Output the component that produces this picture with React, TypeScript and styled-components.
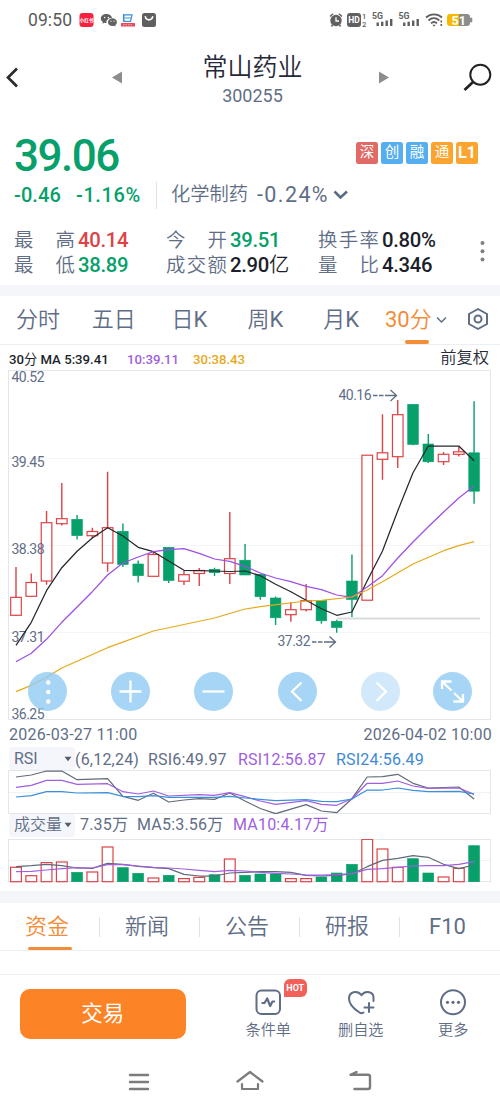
import React from "react";
import styled, { createGlobalStyle } from "styled-components";

const C = {
  green: "#07a06b",
  red: "#dc4346",
  slate: "#5f6e86",
  dark: "#262938",
  ink: "#1c1f2b",
  orange: "#f28d3a",
  purple: "#a15fe0",
  gold: "#e6a91a",
  blue: "#3e8ad6",
  band: "#f5f6fa",
  line: "#eceef2",
};

const Global = createGlobalStyle`
  * { box-sizing: border-box; }
  html, body { margin: 0; padding: 0; background: #fff; }
  body { font-family: Roboto, "Noto Sans CJK SC", sans-serif; width: 500px; }
  svg { display: block; flex: none; }
  svg text { font-family: Roboto, "Noto Sans CJK SC", sans-serif; }
`;

const Screen = styled.div`
  width: 500px;
  height: 1111px;
  overflow: hidden;
  background: #fff;
  display: flex;
  flex-direction: column;
  > * { flex: none; }
`;

const StatusBar = styled.div`
  height: 40px;
  padding: 0 27px 0 28px;
  display: flex;
  align-items: center;
  justify-content: space-between;
`;
const StatusSide = styled.div`
  display: flex;
  align-items: center;
`;
const Clock = styled.span`
  width: 51px;
  font-size: 17.5px;
  line-height: 40px;
  letter-spacing: 0.1px;
  color: #5a5a5a;
`;

const Header = styled.div`
  height: 80px;
  padding: 0 8px 0 5px;
  display: grid;
  grid-template-columns: 106px 1fr 106px;
`;
const HeaderSide = styled.div<{ $top: number }>`
  display: flex;
  justify-content: space-between;
  padding-top: ${(p) => p.$top}px;
`;
const PrevIcon = styled.svg`
  margin-right: -11px;
`;
const NextIcon = styled.svg`
  margin-left: -8px;
`;
const TitleBlock = styled.div`
  display: flex;
  flex-direction: column;
  align-items: center;
  padding: 11px 0 0 8px;
`;
const StockName = styled.div`
  font-size: 25px;
  font-weight: 350;
  line-height: 34px;
  color: ${C.dark};
`;
const StockCode = styled.div`
  font-size: 18px;
  line-height: 22px;
  color: ${C.slate};
`;

const Quote = styled.section`
  height: 165px;
  padding: 12px 0 0 14px;
  position: relative;
`;
const PriceRow = styled.div`
  height: 46px;
  display: flex;
  align-items: center;
  justify-content: space-between;
  padding-right: 22px;
`;
const Price = styled.div`
  padding-top: 1px;
  font-size: 44px;
  line-height: 46px;
  font-weight: 500;
  letter-spacing: -1.5px;
  color: ${C.green};
`;
const Badges = styled.div`
  display: flex;
  gap: 3px;
  margin-top: -4px;
`;
const Badge = styled.span<{ $bg: string; $bold?: boolean }>`
  width: 22px;
  height: 22px;
  border-radius: 2.5px;
  background: ${(p) => p.$bg};
  color: #fff;
  font-size: ${(p) => (p.$bold ? 16 : 14.5)}px;
  font-weight: ${(p) => (p.$bold ? 700 : 400)};
  line-height: 22px;
  text-align: center;
`;
const ChangeRow = styled.div`
  height: 28px;
  margin-top: 3px;
  display: flex;
  align-items: center;
`;
const Change = styled.span<{ $w: number; $ls: number }>`
  width: ${(p) => p.$w}px;
  font-size: 20px;
  line-height: 28px;
  font-weight: 500;
  letter-spacing: ${(p) => p.$ls}px;
  color: ${C.green};
`;
const Divider = styled.i<{ $h: number }>`
  width: 1px;
  height: ${(p) => p.$h}px;
  background: #dfe2e8;
`;
const Sector = styled.span`
  margin-left: 14px;
  width: 86px;
  font-size: 19.3px;
  font-weight: 350;
  line-height: 28px;
  color: ${C.slate};
`;
const SectorChange = styled.span`
  width: 76px;
  font-size: 21.5px;
  letter-spacing: 1.4px;
  line-height: 28px;
  color: ${C.slate};
`;
const Stats = styled.div`
  margin-top: 18.5px;
  display: grid;
  grid-template-columns: 152px 152px 1fr;
  grid-auto-rows: 25px;
`;
const Stat = styled.div`
  display: flex;
  align-items: center;
  line-height: 25px;
`;
const StatLabel = styled.span`
  width: 61px;
  display: flex;
  justify-content: space-between;
  font-size: 19.4px;
  font-weight: 350;
  color: ${C.slate};
`;
const StatValue = styled.span<{ $c: string }>`
  padding-left: 3px;
  font-size: 20.3px;
  font-weight: 500;
  letter-spacing: -0.3px;
  white-space: nowrap;
  color: ${(p) => p.$c};
  i { font-style: normal; font-weight: 350; }
`;
const MoreDots = styled.div`
  position: absolute;
  left: 480px;
  top: 120px;
`;

const Band = styled.div<{ $h: number }>`
  height: ${(p) => p.$h}px;
  background: ${C.band};
`;

const PeriodTabs = styled.nav`
  height: 49px;
  display: flex;
  border-bottom: 1px solid ${C.line};
`;
const Period = styled.div<{ $active?: boolean }>`
  width: ${(p) => (p.$active ? 78 : 75.8)}px;
  padding-left: ${(p) => (p.$active ? 6 : 0)}px;
  display: flex;
  align-items: center;
  justify-content: ${(p) => (p.$active ? "flex-start" : "center")};
  gap: 4px;
  position: relative;
  font-size: 22px;
  font-weight: 350;
  line-height: 48px;
  padding-bottom: 1px;
  white-space: nowrap;
  color: ${(p) => (p.$active ? C.orange : C.slate)};
  b { font-weight: 400; }
`;
const ActiveBar = styled.i<{ $l: number; $w: number; $h: number }>`
  position: absolute;
  left: ${(p) => p.$l}px;
  bottom: 0;
  width: ${(p) => p.$w}px;
  height: ${(p) => p.$h}px;
  border-radius: 2px;
  background: ${C.orange};
`;
const SettingsCell = styled.div`
  padding: 11px 0 0 10px;
`;

const Legend = styled.div`
  height: 25px;
  padding: 0 11px 0 9px;
  display: flex;
  align-items: center;
  line-height: 25px;
`;
const LegendItem = styled.span<{ $c: string; $w: number }>`
  width: ${(p) => p.$w}px;
  font-size: 13.2px;
  font-weight: 500;
  padding-top: 3px;
  white-space: nowrap;
  color: ${(p) => p.$c};
  i { font-style: normal; font-weight: 400; }
`;
const Adjust = styled.span`
  margin-left: auto;
  font-size: 16.3px;
  font-weight: 350;
  line-height: 22px;
  color: ${C.dark};
`;

const ChartArea = styled.div`
  height: 350px;
  position: relative;
`;
const Controls = styled.div`
  position: absolute;
  left: 27.5px;
  top: 302px;
  display: flex;
  gap: 44.4px;
`;
const Control = styled.button<{ $faded?: boolean; $shift?: boolean }>`
  width: 39px;
  height: 39px;
  padding: 0;
  border: 0;
  border-radius: 50%;
  background: rgba(145, 202, 243, ${(p) => (p.$faded ? 0.42 : 0.8)});
  margin-left: ${(p) => (p.$shift ? -11 : 0)}px;
`;

const DateRow = styled.div`
  height: 26px;
  padding: 2px 8px 0 9px;
  display: flex;
  justify-content: space-between;
  font-size: 16px;
  line-height: 26px;
  letter-spacing: 0.25px;
  color: ${C.slate};
`;
const IndicatorRow = styled.div<{ $h: number; $pb?: number }>`
  height: ${(p) => p.$h}px;
  padding: 0 0 ${(p) => p.$pb ?? 0}px 9px;
  display: flex;
  align-items: center;
  font-size: 16px;
`;
const Picker = styled.div`
  width: 66px;
  height: 23px;
  padding: 0 3px 0 5px;
  margin-top: 1px;
  border-radius: 3px;
  background: #f4f6fb;
  display: flex;
  align-items: center;
  justify-content: space-between;
  line-height: 22px;
  font-weight: 400;
  white-space: nowrap;
  color: ${C.slate};
  i { font-style: normal; font-weight: 350; }
`;
const Reading = styled.span<{ $w: number; $c?: string; $ml?: number; $mt?: number }>`
  width: ${(p) => p.$w}px;
  margin-left: ${(p) => p.$ml ?? 0}px;
  margin-top: ${(p) => p.$mt ?? 0}px;
  letter-spacing: 0.2px;
  line-height: 22px;
  white-space: nowrap;
  color: ${(p) => p.$c ?? C.slate};
`;

const InfoTabs = styled.nav`
  height: 48px;
  display: flex;
  border-bottom: 1px solid ${C.line};
`;
const InfoTab = styled.div<{ $active?: boolean }>`
  width: 100px;
  height: 47px;
  display: flex;
  align-items: center;
  position: relative;
  font-size: 22px;
  font-weight: 350;
  color: ${(p) => (p.$active ? C.orange : C.slate)};
  span { flex: 1; padding-right: 5px; text-align: center; line-height: 46px; }
  b { font-weight: 400; }
`;
const Spacer = styled.div`
  height: 24px;
  border-bottom: 1px solid ${C.line};
`;

const ActionBar = styled.div`
  height: 75px;
  padding-left: 19.5px;
  display: flex;
`;
const TradeButton = styled.button`
  width: 166.5px;
  height: 50px;
  margin: 14px 36px 0 0;
  padding: 0;
  border: 0;
  border-radius: 10px;
  background: #fd8327;
  color: #fff;
  font: 400 21.5px/50px Roboto, "Noto Sans CJK SC", sans-serif;
`;
const Action = styled.div`
  width: 92.5px;
  padding-top: 13px;
  display: flex;
  flex-direction: column;
  align-items: center;
  position: relative;
`;
const ActionLabel = styled.span`
  font-size: 15.2px;
  font-weight: 350;
  line-height: 28px;
  color: ${C.slate};
`;
const HotTag = styled.span`
  position: absolute;
  left: 62px;
  top: 4px;
  width: 22.5px;
  height: 18px;
  border-radius: 6px 6px 6px 0;
  background: #f2605a;
  color: #fff;
  font-size: 9px;
  font-weight: 700;
  line-height: 18px;
  text-align: center;
`;
const NavBar = styled.div`
  height: 61px;
  padding: 20px 127px 0 128px;
  display: flex;
  justify-content: space-between;
`;

/* [open wick top, body top, body bottom, wick bottom, rising] */
type Candle = [number, number, number, number, boolean];
const candles: Candle[] = [
  [567, 597.3, 615.3, 615.3, true], [573.5, 582.5, 596.3, 596.3, true],
  [511, 522.7, 581, 584.7, true], [483, 518.7, 523.7, 525.5, true],
  [515, 519.3, 535.7, 539.5, false], [527.7, 531.5, 535.7, 538, true],
  [471.7, 527.7, 563, 571.7, true], [523.5, 531.3, 564.5, 567, false],
  [560.5, 564, 575.7, 582.5, false], [552, 554.5, 576.3, 576.3, true],
  [547.3, 547.3, 580.5, 583, false], [571, 574.7, 581.2, 585, true],
  [568, 570.5, 573.5, 586, true], [567.7, 569.3, 572.7, 576, false],
  [512, 558.7, 573.5, 584, true], [544, 560.2, 575, 575, false],
  [573.7, 574.5, 596.7, 599.7, false], [596.5, 598, 617.8, 625, false],
  [602.3, 609.7, 614.7, 621.7, true], [584, 600.7, 609.7, 611.5, true],
  [600.3, 600.3, 620.8, 623.7, false], [619.7, 621.3, 627.5, 632.7, false],
  [554.5, 581, 599.5, 617, false], [455.2, 455.2, 600.2, 600.2, true],
  [414.3, 452.8, 459.3, 479.7, true], [400, 414.7, 456.7, 468, true],
  [404.3, 404.3, 444.5, 445.3, false], [434, 444, 461.8, 463, false],
  [452, 454.3, 461.7, 465, true], [446.3, 451.8, 454.3, 456.5, true],
  [401.3, 452.8, 491.2, 503.7, false],
];
const volumeTops = [
  867.3, 875.7, 862.6, 862, 872.3, 872, 847, 867.7, 873.3, 878, 875.3, 878.6, 877.4,
  874.7, 859, 875.3, 874, 874, 878.6, 878.6, 877, 873, 864.3, 839.3, 849, 867.3,
  858.7, 873, 877, 868.3, 845.7,
];

type Pt = [number, number];
const seq = (ys: number[]): Pt[] => ys.map((y, i) => [i, y]);
const cx = (i: number) => 16 + i * 15.27;
const path = (pts: Pt[], top: number) =>
  pts.map(([i, y], n) => `${n ? "L" : "M"}${cx(i).toFixed(1)} ${(y - top).toFixed(1)}`).join("");

const ma5 = seq([645.3, 622.3, 590.7, 567.7, 551.3, 538, 527.7, 536, 547.3, 551.7, 561, 570.3, 570.7, 571, 571.5, 571, 575.7, 584.3, 591.7, 600.3, 608.7, 615.3, 612, 580.7, 551, 510.7, 472.7, 446, 446, 446, 460.7]);
const ma10 = seq([661.7, 653.3, 639.3, 622.3, 607, 591.7, 575, 563, 557, 551.7, 549.7, 548.7, 553.3, 559, 561.3, 566.3, 573, 578, 581.7, 586.3, 589.7, 595, 597.3, 587, 575.7, 558, 542, 526.7, 512, 498, 486]);
const ma30: Pt[] = [[0, 691.7], [1, 685.3], [2, 677.3], [3, 668], [6, 647.7], [9, 631], [13, 618], [15, 609], [16, 606.7], [19, 601], [20, 600.3], [22, 597], [23, 590], [24, 581.7], [26, 564], [28, 550.7], [29, 545.7], [30, 541.7]];

const rsi6: Pt[] = [[0, 777], [1, 775], [2, 771], [3, 771], [4, 779.7], [6, 778.7], [7, 796.3], [8, 800.3], [9, 793.3], [10, 802], [11, 800], [12, 798.7], [13, 799.3], [14, 793], [15, 801], [16, 808.5], [17, 813.7], [19, 804.7], [20, 811], [21, 812.7], [22, 798.7], [23, 777], [24, 776.7], [25, 774.3], [26, 783.3], [27, 788], [29, 787], [30, 799]];
const rsi12: Pt[] = [[0, 787.3], [1, 785.3], [2, 780.3], [3, 780.3], [4, 784.3], [6, 783.7], [7, 791.7], [8, 794], [9, 791], [10, 796], [12, 794.7], [13, 795.3], [14, 792.7], [15, 796.7], [16, 801], [17, 804.3], [19, 800.7], [20, 804.3], [21, 805.3], [22, 798.7], [23, 783.3], [24, 783.3], [25, 781], [26, 786], [27, 788.3], [29, 788], [30, 794.3]];
const rsi24: Pt[] = [[0, 797], [1, 795.7], [2, 791.7], [3, 791.7], [4, 793], [6, 792.7], [7, 796.3], [8, 796.7], [9, 795.7], [10, 797.3], [13, 797.3], [14, 796.3], [15, 798], [17, 800.7], [19, 799.7], [20, 801.3], [21, 801.7], [22, 799], [23, 790], [24, 790], [25, 788], [26, 790.3], [27, 791.7], [29, 791.3], [30, 794]];
const vol5 = seq([866.7, 865.7, 864.3, 865.7, 868, 868.3, 863.3, 864.3, 866.3, 867.7, 868.7, 874.3, 876, 876, 873, 872.3, 871.7, 871.7, 872.3, 875.3, 876, 875.3, 874, 866.7, 860.3, 858.3, 855.7, 857.3, 864.3, 868.7, 865]);
const vol10 = seq([871.7, 871.3, 870, 868.7, 867.7, 868, 864.7, 864.7, 866, 867.3, 868, 869, 870.3, 871.7, 870.3, 871, 872.3, 873.3, 874, 875, 875, 874.7, 873.7, 869.3, 868.7, 867.3, 866, 865.7, 865.7, 864.3, 861.7]);

const Line = ({ pts, top, color }: { pts: Pt[]; top: number; color: string }) => (
  <path d={path(pts, top)} fill="none" stroke={color} strokeWidth={1.25} strokeLinejoin="round" />
);

const PriceChart = () => {
  const T = 370;
  return (
    <svg width="500" height="350" viewBox="0 0 500 350">
      <rect x="8.5" y="0.5" width="482" height="349" fill="none" stroke="#e4e6ec" />
      {[88.5, 175.5, 262.5].map((y) => (
        <path key={y} d={`M9 ${y}H490`} stroke="#f4f5f7" />
      ))}
      <path d="M337 248.500H480" stroke="#dadbdd" strokeWidth="2.200" />
      {candles.map(([wt, bt, bb, wb, up], i) => {
        const x = cx(i);
        const c = up ? C.red : C.green;
        return (
          <g key={i} stroke={c}>
            <path d={`M${x} ${wt - T}V${bt - T}M${x} ${bb - T}V${wb - T}`} strokeWidth="1.400" />
            <rect x={x - 5.3} y={bt - T} width="10.600" height={bb - bt} fill={up ? "none" : c} strokeWidth={up ? 1.2 : 0.6} />
          </g>
        );
      })}
      <g fontSize="14" fill={C.slate}>
        <text x="11.500" y="12" textLength="33">40.52</text>
        <text x="11.500" y="96.800" textLength="33">39.45</text>
        <text x="11.500" y="184" textLength="33">38.38</text>
        <text x="11.500" y="271.500" textLength="33">37.31</text>
        <text x="11.500" y="348.500" textLength="33">36.25</text>
        <text x="338.500" y="29.800" textLength="33">40.16</text>
        <text x="277.500" y="276.300" textLength="33">37.32</text>
      </g>
      <Line pts={ma5} top={T} color="#25272f" />
      <Line pts={ma10} top={T} color="#9c4fe6" />
      <Line pts={ma30} top={T} color={C.gold} />
      <g fill="none" stroke={C.slate} strokeWidth="1.300">
        <path d="M373 25.500h4.500M379 25.500h4.500M385 25.500h12M390.500 20l6 5.500-6 5.500" />
        <path d="M312 272h4.500M318 272h4.500M324 272h12M329.500 266.500l6 5.500-6 5.500" />
      </g>
    </svg>
  );
};

const RsiChart = () => (
  <svg width="500" height="44" viewBox="0 0 500 44">
    <rect x="8.500" y="0.500" width="482" height="43" fill="none" stroke="#e4e6ec" />
    <path d="M9 22.500H490" stroke="#f1f2f5" />
    <Line pts={rsi6} top={770} color="#626b79" />
    <Line pts={rsi12} top={770} color={C.purple} />
    <Line pts={rsi24} top={770} color="#3a90dd" />
  </svg>
);

const VolumeChart = () => (
  <svg width="500" height="52" viewBox="0 0 500 52">
    <rect x="8.500" y="0.500" width="482" height="42" fill="none" stroke="#e4e6ec" />
    <path d="M9 21.500H490" stroke="#f1f2f5" />
    {volumeTops.map((y, i) => {
      const up = candles[i][4];
      const c = up ? C.red : C.green;
      return (
        <rect key={i} x={cx(i) - 5.4} y={y - 839} width="10.800" height={881.7 - y} fill={up ? "none" : c} stroke={c} strokeWidth={up ? 1.2 : 0.6} />
      );
    })}
    <Line pts={vol5} top={839} color="#5f6b78" />
    <Line pts={vol10} top={839} color={C.purple} />
  </svg>
);

const Caret = () => (
  <svg width="8" height="6" viewBox="0 0 8 6"><path d="M0.500 0.800h7L4 5.200z" fill="#565d6b" /></svg>
);

const AppIcons = () => (
  <svg width="78" height="16" viewBox="0 0 78 16">
    <rect x="0.500" y="1" width="14" height="14" rx="3" fill="#f4213f" />
    <text x="7.500" y="9.700" fontSize="4.600" fontWeight="700" fill="#fff" textAnchor="middle">小红书</text>
    <g fill="#606060">
      <path d="M27.500 2c-3.200 0-5.700 2-5.700 4.500 0 1.500.8 2.700 2.100 3.500l-.5 1.700 2-1c.7.200 1.300.3 2.100.3C27 8 29 6 33 6c-.5-2.400-2.800-4-5.500-4z" />
      <path d="M29 10.200c0-2.200 2-3.900 4.500-3.900s4.400 1.700 4.400 3.900c0 1.200-.6 2.200-1.600 2.900l.4 1.500-1.700-.9c-3.500.8-6-1-6-3.500z" />
    </g>
    <g fill="#fff"><circle cx="25.700" cy="5.500" r=".7" /><circle cx="29.400" cy="5.500" r=".7" /><circle cx="32" cy="9.200" r=".6" /><circle cx="35" cy="9.200" r=".6" /></g>
    <path d="M45 2.800h8l-1.500 6.500h-6.500zM46 6h6M44.500 2v7.500" fill="none" stroke="#3c8fd8" strokeWidth="1.200" />
    <rect x="42" y="11" width="14" height="3.600" rx=".5" fill="#e8485a" />
    <path d="M44 12.800h10" stroke="#f7b6bd" strokeWidth="1" strokeDasharray="1.500 1" />
    <rect x="63" y="1" width="14" height="14" rx="2.500" fill="#606060" />
    <path d="M66.300 4.700c.8 4.200 6.600 4.200 7.400 0" fill="none" stroke="#fff" strokeWidth="1.600" strokeLinecap="round" />
  </svg>
);

const Signal = ({ x }: { x: number }) => (
  <g fill="#606060">
    <text x={x} y="7" fontSize="8.500" fontWeight="700" textLength="11" lengthAdjust="spacingAndGlyphs">5G</text>
    <rect x={x + 4.5} y="10.500" width="2.400" height="3.500" />
    <rect x={x + 9} y="9.700" width="2.400" height="4.300" />
    <rect x={x + 13.5} y="8.500" width="2.400" height="5.500" />
    <rect x={x + 18} y="7" width="2.400" height="7" />
  </g>
);

const SystemIcons = () => (
  <svg width="144" height="16" viewBox="0 0 144 16">
    <circle cx="7" cy="8.500" r="5.700" fill="#606060" />
    <path d="M1 4.500L4 1.800M13 4.500L10 1.800M3.500 12.800L2.500 14.500M10.500 12.800l1 1.700" stroke="#606060" strokeWidth="1.500" />
    <path d="M7 5.200V9h3" fill="none" stroke="#fff" strokeWidth="1.300" />
    <rect x="18" y="1" width="14" height="14" rx="3" fill="#606060" />
    <text x="25" y="11" fontSize="8.500" fontWeight="700" fill="#fff" textAnchor="middle">HD</text>
    <text x="33" y="6.500" fontSize="7.500" fontWeight="500" fill="#606060">1</text>
    <text x="33" y="14.500" fontSize="7.500" fontWeight="500" fill="#606060">2</text>
    <Signal x={43} />
    <Signal x={69.5} />
    <g fill="none" stroke="#606060" strokeWidth="1.800">
      <path d="M97 5.500c4.500-4.200 11.500-4.200 16 0" />
      <path d="M99.500 8.500c3.200-3 7.600-3 10.800 0" />
      <path d="M102 11.400c1.800-1.700 4.200-1.700 6 0" />
    </g>
    <path d="M103.300 12.800h3.400L105 14.700z" fill="#606060" />
    <path d="M112.300 8.500v2M112.300 12v2" stroke="#606060" strokeWidth="1.600" />
    <path d="M121 2h9v12h-9a3 3 0 0 1-3-3V5a3 3 0 0 1 3-3z" fill="#f7b900" />
    <path d="M130 2h8a3 3 0 0 1 3 3v6a3 3 0 0 1-3 3h-8z" fill="#8c8c8c" />
    <rect x="141" y="5.500" width="2.300" height="5" rx="1" fill="#8c8c8c" />
    <text x="129.700" y="12.500" fontSize="12.500" fontWeight="700" fill="#fff" textAnchor="middle">51</text>
  </svg>
);

const controlArt = [
  <g fill="#fff"><circle cx="20.200" cy="10.500" r="2.200" /><circle cx="20.200" cy="20" r="2.200" /><circle cx="20.200" cy="29.500" r="2.200" /></g>,
  <path d="M8.500 19.500h22M19.500 8.500v22" />,
  <path d="M8.500 19.500h22" />,
  <path d="M23.500 10.500l-9.500 9 9.500 9.500" />,
  <path d="M15.500 10.500l9.500 9-9.500 9.500" />,
  <path d="M9 17V9.500h9.500M9.500 10l9 8.500M30 22v7.500h-9.500M29.500 29l-8.500-8" />,
];

const stats: { label: string; value: React.ReactNode; color: string }[] = [
  { label: "最高", value: "40.14", color: C.red },
  { label: "今开", value: "39.51", color: C.green },
  { label: "换手率", value: "0.80%", color: C.ink },
  { label: "最低", value: "38.89", color: C.green },
  { label: "成交额", value: <>2.90<i>亿</i></>, color: C.ink },
  { label: "量比", value: "4.346", color: C.ink },
];

export default function App() {
  return (
    <Screen>
      <Global />
      <StatusBar>
        <StatusSide><Clock>09:50</Clock><AppIcons /></StatusSide>
        <StatusSide><SystemIcons /></StatusSide>
      </StatusBar>

      <Header>
        <HeaderSide $top={27}>
          <svg width="14" height="21" viewBox="0 0 14 21"><path d="M12 1.500L3 10.500l9 9" fill="none" stroke="#2b2b2b" strokeWidth="2.700" /></svg>
          <PrevIcon width="10" height="21" viewBox="0 0 10 21"><path d="M10 4.500v12L0 10.500z" fill="#8d8d8d" /></PrevIcon>
        </HeaderSide>
        <TitleBlock>
          <StockName>常山药业</StockName>
          <StockCode>300255</StockCode>
        </TitleBlock>
        <HeaderSide $top={23}>
          <NextIcon width="11" height="29" viewBox="0 0 11 29"><path d="M1 8.500v12l10-6z" fill="#8d8d8d" /></NextIcon>
          <svg width="29" height="29" viewBox="0 0 29 29"><circle cx="17.300" cy="11.700" r="10" fill="none" stroke="#222" strokeWidth="2" /><path d="M10 19L1.500 27" stroke="#222" strokeWidth="2.800" /></svg>
        </HeaderSide>
      </Header>

      <Quote>
        <PriceRow>
          <Price>39.06</Price>
          <Badges>
            <Badge $bg="#e26a66">深</Badge>
            <Badge $bg="#54aeef">创</Badge>
            <Badge $bg="#54aeef">融</Badge>
            <Badge $bg="#fba430">通</Badge>
            <Badge $bg="#fba430" $bold>L1</Badge>
          </Badges>
        </PriceRow>
        <ChangeRow>
          <Change $w={62} $ls={0.1}>-0.46</Change>
          <Change $w={80} $ls={0.6}>-1.16%</Change>
          <Divider $h={27} />
          <Sector>化学制药</Sector>
          <SectorChange>-0.24%</SectorChange>
          <svg width="16" height="12" viewBox="0 0 16 12"><path d="M1.500 2.500L7.500 8.500l6.500-6" fill="none" stroke="#5b6b86" strokeWidth="2.600" /></svg>
        </ChangeRow>
        <Stats>
          {stats.map((s) => (
            <Stat key={s.label}>
              <StatLabel>{s.label.split("").map((ch) => <span key={ch}>{ch}</span>)}</StatLabel>
              <StatValue $c={s.color}>{s.value}</StatValue>
            </Stat>
          ))}
        </Stats>
        <MoreDots>
          <svg width="5" height="24" viewBox="0 0 5 24" fill="#7d8087"><circle cx="2.500" cy="3" r="2" /><circle cx="2.500" cy="11.300" r="2" /><circle cx="2.500" cy="19.600" r="2" /></svg>
        </MoreDots>
      </Quote>

      <Band $h={11} />

      <PeriodTabs>
        <Period>分时</Period>
        <Period>五日</Period>
        <Period><span>日<b>K</b></span></Period>
        <Period><span>周<b>K</b></span></Period>
        <Period><span>月<b>K</b></span></Period>
        <Period $active>
          <span><b>30</b>分</span>
          <svg width="11" height="8" viewBox="0 0 11 8"><path d="M1 1.500l4.500 4.500L10 1.500" fill="none" stroke={C.slate} strokeWidth="1.500" /></svg>
          <ActiveBar $l={26} $w={24} $h={4} />
        </Period>
        <SettingsCell>
          <svg width="22" height="24" viewBox="0 0 22 24" fill="none" stroke={C.slate} strokeWidth="2" strokeLinejoin="round"><path d="M11 2l9 5v10l-9 5-9-5V7z" /><circle cx="11" cy="12" r="3.500" /></svg>
        </SettingsCell>
      </PeriodTabs>

      <Legend>
        <LegendItem $c={C.ink} $w={118}>30<i>分</i> MA 5:39.41</LegendItem>
        <LegendItem $c={C.purple} $w={66}>10:39.11</LegendItem>
        <LegendItem $c={C.gold} $w={60}>30:38.43</LegendItem>
        <Adjust>前复权</Adjust>
      </Legend>

      <ChartArea>
        <PriceChart />
        <Controls>
          {controlArt.map((art, i) => (
            <Control key={i} $faded={i === 4} $shift={i === 5}>
              <svg width="39" height="39" viewBox="0 0 39 39" fill="none" stroke={i === 0 ? "none" : "#fff"} strokeWidth="2.300">{art}</svg>
            </Control>
          ))}
        </Controls>
      </ChartArea>

      <DateRow><span>2026-03-27 11:00</span><span>2026-04-02 10:00</span></DateRow>

      <IndicatorRow $h={24}>
        <Picker>RSI<Caret /></Picker>
        <Reading $w={73} $mt={3}>(6,12,24)</Reading>
        <Reading $w={90} $mt={3}>RSI6:49.97</Reading>
        <Reading $w={98} $mt={3} $c={C.purple}>RSI12:56.87</Reading>
        <Reading $w={90} $mt={3} $c={C.blue}>RSI24:56.49</Reading>
      </IndicatorRow>
      <RsiChart />
      <IndicatorRow $h={25} $pb={4}>
        <Picker><i>成交量</i><Caret /></Picker>
        <Reading $w={57} $ml={5}>7.35万</Reading>
        <Reading $w={96}>MA5:3.56万</Reading>
        <Reading $w={95} $c={C.purple}>MA10:4.17万</Reading>
      </IndicatorRow>
      <VolumeChart />

      <Band $h={12} />

      <InfoTabs>
        {["资金", "新闻", "公告", "研报", "F10"].map((t, i) => (
          <InfoTab key={t} $active={i === 0}>
            <span>{t === "F10" ? <b>{t}</b> : t}</span>
            {i < 4 && <Divider $h={20} />}
            {i === 0 && <ActiveBar $l={28} $w={44} $h={3} />}
          </InfoTab>
        ))}
      </InfoTabs>
      <Spacer />

      <ActionBar>
        <TradeButton>交易</TradeButton>
        <Action>
          <svg width="28" height="28" viewBox="0 0 28 28" fill="none" stroke={C.slate} strokeWidth="2"><rect x="2.500" y="2.500" width="23.500" height="23.500" rx="5" /><path d="M7.500 15h3l2.700-4.500 3 7.500 2.300-4.500h2.500" strokeWidth="2.200" strokeLinejoin="round" /></svg>
          <ActionLabel>条件单</ActionLabel>
          <HotTag>HOT</HotTag>
        </Action>
        <Action>
          <svg width="28" height="28" viewBox="0 0 28 28" fill="none" stroke={C.slate} strokeWidth="2" strokeLinecap="round"><path d="M16.500 24.500c-1.500 1-2.800.8-4 0C7 21 2 16 2 10.500 2 4 10 1.500 14.500 7 19 1.500 27 4 26.500 10.500V13M17.500 19.500h9M22 15v9" /></svg>
          <ActionLabel>删自选</ActionLabel>
        </Action>
        <Action>
          <svg width="28" height="28" viewBox="0 0 28 28"><circle cx="14" cy="14.300" r="12" fill="none" stroke={C.slate} strokeWidth="2" /><g fill={C.slate}><circle cx="8.500" cy="14.300" r="1.600" /><circle cx="14" cy="14.300" r="1.600" /><circle cx="19.500" cy="14.300" r="1.600" /></g></svg>
          <ActionLabel>更多</ActionLabel>
        </Action>
      </ActionBar>

      <NavBar>
        <svg width="22" height="24" viewBox="0 0 22 24" stroke="#7c7c7c" strokeWidth="2.400" strokeLinecap="round"><path d="M2 5h18M2 12h18M2 19h18" /></svg>
        <svg width="28" height="24" viewBox="0 0 28 24" fill="none" stroke="#7c7c7c" strokeWidth="2.200" strokeLinecap="round" strokeLinejoin="round"><path d="M1.500 11.500L14 2l12.500 9.500M6 14v5h16v-5" /></svg>
        <svg width="24" height="24" viewBox="0 0 24 24" fill="none" stroke="#7c7c7c" strokeWidth="2.400" strokeLinecap="round" strokeLinejoin="round"><path d="M7.500 2L1.500 4.800H19a2 2 0 0 1 2 2V17a2 2 0 0 1-2 2H5.500" /></svg>
      </NavBar>
    </Screen>
  );
}
